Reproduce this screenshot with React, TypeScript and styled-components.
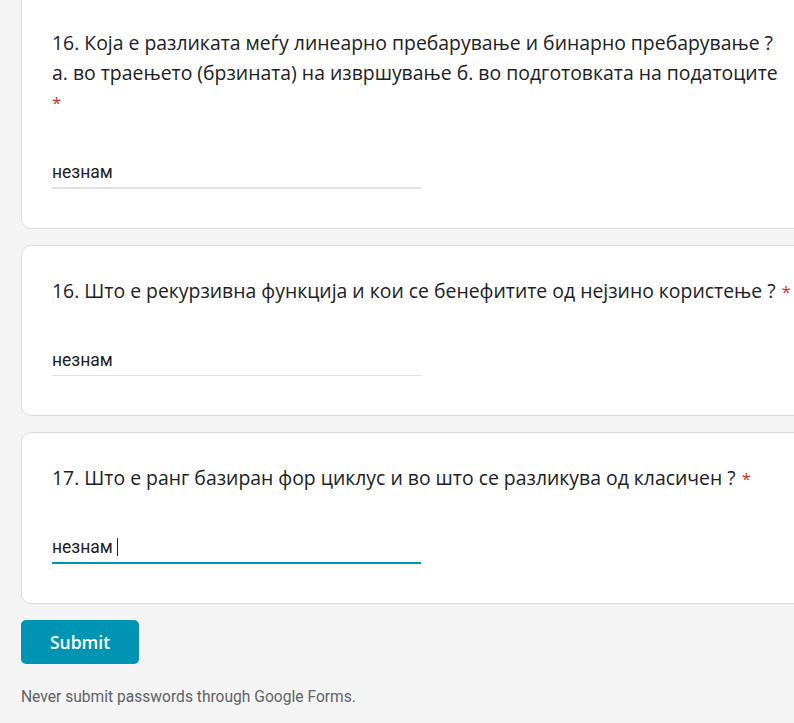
import React from "react";
import styled, { createGlobalStyle } from "styled-components";

const GlobalStyle = createGlobalStyle`
  html, body {
    margin: 0;
    padding: 0;
    background: #f4f4f4;
    overflow: hidden;
  }
  * { box-sizing: border-box; }
`;

const Page = styled.main`
  margin-top: -11px;
  padding-left: 21px;
  display: flex;
  flex-direction: column;
  align-items: flex-start;
`;

const List = styled.div`
  display: flex;
  flex-direction: column;
  gap: 16px;
`;

const Card = styled.section<{ $padTop?: number }>`
  width: 800px;
  background: #ffffff;
  border: 1px solid #dadce0;
  border-radius: 10px;
  padding: ${(p) => p.$padTop ?? 30}px 30px 30px 30px;
`;

const Question = styled.div`
  font-family: "Open Sans", "Noto Sans", sans-serif;
  font-size: 19.4px;
  line-height: 30px;
  color: #202124;
  white-space: nowrap;
`;

const Required = styled.span`
  color: #d93025;
  font-size: 17px;
  line-height: 1;
  padding-left: 6px;
`;

const RequiredLine = styled.div`
  color: #d93025;
  font-size: 17px;
  line-height: 30px;
`;

const Field = styled.div<{ $line: string; $thick: number }>`
  width: 50%;
  margin-top: 37px;
  margin-bottom: 9px;
  padding-bottom: 2px;
  border-bottom: ${(p) => p.$thick}px solid ${(p) => p.$line};
`;

const FieldText = styled.div`
  height: 30px;
  padding-top: 3px;
  font-family: Roboto, "Liberation Sans", sans-serif;
  font-size: 17.5px;
  color: #202124;
  display: flex;
  align-items: center;
`;

const Caret = styled.span`
  display: inline-block;
  width: 1px;
  height: 18px;
  background: #202124;
  margin-left: 4px;
`;

const SubmitButton = styled.button`
  margin-top: 16px;
  width: 118px;
  height: 44px;
  border: none;
  border-radius: 5px;
  background: #0094b3;
  color: #ffffff;
  font-family: "Open Sans", "Noto Sans", sans-serif;
  font-weight: 600;
  font-size: 17.5px;
  cursor: pointer;
`;

const Footer = styled.p`
  margin: 23px 0 0 0;
  font-family: Roboto, "Liberation Sans", sans-serif;
  font-size: 15.6px;
  line-height: 20px;
  color: #5f6368;
`;

export default function App() {
  return (
    <>
      <GlobalStyle />
      <Page>
        <List>
          <Card $padTop={38}>
            <Question>
              16. Која е разликата меѓу линеарно пребарување и бинарно пребарување ?
              <br />
              а. во траењето (брзината) на извршување б. во подготовката на податоците
              <RequiredLine>*</RequiredLine>
            </Question>
            <Field $line="#e0e0e0" $thick={2}>
              <FieldText>незнам</FieldText>
            </Field>
          </Card>
          <Card>
            <Question>
              16. Што е рекурзивна функција и кои се бенефитите од нејзино користење ?
              <Required>*</Required>
            </Question>
            <Field $line="#e0e0e0" $thick={1}>
              <FieldText>незнам</FieldText>
            </Field>
          </Card>
          <Card>
            <Question>
              17. Што е ранг базиран фор циклус и во што се разликува од класичен ?
              <Required>*</Required>
            </Question>
            <Field $line="#0094b3" $thick={2}>
              <FieldText>
                незнам
                <Caret />
              </FieldText>
            </Field>
          </Card>
        </List>
        <SubmitButton type="button">Submit</SubmitButton>
        <Footer>Never submit passwords through Google Forms.</Footer>
      </Page>
    </>
  );
}
